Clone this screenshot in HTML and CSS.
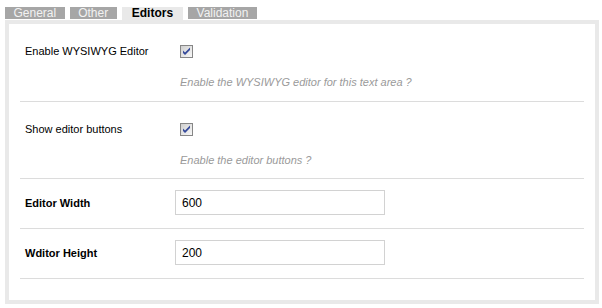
FILE: index.html
```html
<!DOCTYPE html>
<html lang="en">
<head>
    <meta charset="UTF-8">
    <title>Editors</title>
    <link rel="stylesheet" href="styles.css">
</head>
<body>

    <div class="tabs">
        <span class="tab">General</span>
        <span class="tab">Other</span>
        <span class="tab active">Editors</span>
        <span class="tab">Validation</span>
    </div>

    <div class="panel">
        <div class="row row-check">
            <div class="label">Enable WYSIWYG Editor</div>
            <div class="control">
                <span class="check">
                    <svg width="11" height="11" viewBox="0 0 11 11"><polygon points="2,4.5 4,6.5 9,1.5 9,4 4,9 2,7" fill="#34499a"/></svg>
                </span>
                <div class="hint">Enable the WYSIWYG editor for this text area ?</div>
            </div>
        </div>

        <div class="row row-check">
            <div class="label">Show editor buttons</div>
            <div class="control">
                <span class="check">
                    <svg width="11" height="11" viewBox="0 0 11 11"><polygon points="2,4.5 4,6.5 9,1.5 9,4 4,9 2,7" fill="#34499a"/></svg>
                </span>
                <div class="hint">Enable the editor buttons ?</div>
            </div>
        </div>

        <div class="row row-field">
            <label class="label strong" for="ed-width">Editor Width</label>
            <input class="field" id="ed-width" type="text" value="600">
        </div>

        <div class="row row-field">
            <label class="label strong" for="ed-height">Wditor Height</label>
            <input class="field" id="ed-height" type="text" value="200">
        </div>
    </div>

</body>
</html>
```

FILE: styles.css
```css
body {
    margin: 0;
    padding: 7px 3px 0 5px;
    font-family: "Liberation Sans", Arial, sans-serif;
    font-size: 11px;
    color: #000;
    background: #fff;
}

.tabs {
    display: flex;
    align-items: flex-start;
    gap: 5px;
    height: 13px;
}

.tab {
    background: #a6a6a6;
    color: #f2f2f2;
    font-size: 12px;
    height: 12px;
    line-height: 12px;
    padding: 0 8.5px;
}

.tab.active {
    background: #e9e9e9;
    color: #000;
    font-weight: bold;
    height: 13px;
    padding: 0 10px;
}

.panel {
    width: 594px;
    box-sizing: border-box;
    border: 4px solid #e9e9e9;
    padding: 0 11px 21px;
}

.row {
    display: grid;
    grid-template-columns: 150px 1fr;
    padding-left: 5px;
    border-bottom: 1px solid #dcdcdc;
}

.row-check {
    padding-top: 21px;
    padding-bottom: 11px;
    line-height: 13px;
}

.row-check:first-child {
    padding-bottom: 12px;
}

.row-field {
    align-items: center;
    padding-top: 11px;
    padding-bottom: 13px;
}

.label.strong {
    font-weight: bold;
}

.control {
    padding-left: 5px;
}

.check {
    display: block;
    width: 13px;
    height: 13px;
    box-sizing: border-box;
    border: 1px solid #868686;
    background: linear-gradient(135deg, #cfcfcf, #f8f8f8);
}

.check svg {
    display: block;
}

.hint {
    margin-top: 18px;
    color: #9a9a9a;
    font-style: italic;
}

.field {
    width: 210px;
    height: 25px;
    box-sizing: border-box;
    margin: 0;
    border: 1px solid #d2d2d2;
    padding: 0 6px;
    font-family: "Liberation Sans", Arial, sans-serif;
    font-size: 12px;
    color: #000;
    outline: none;
}
```
